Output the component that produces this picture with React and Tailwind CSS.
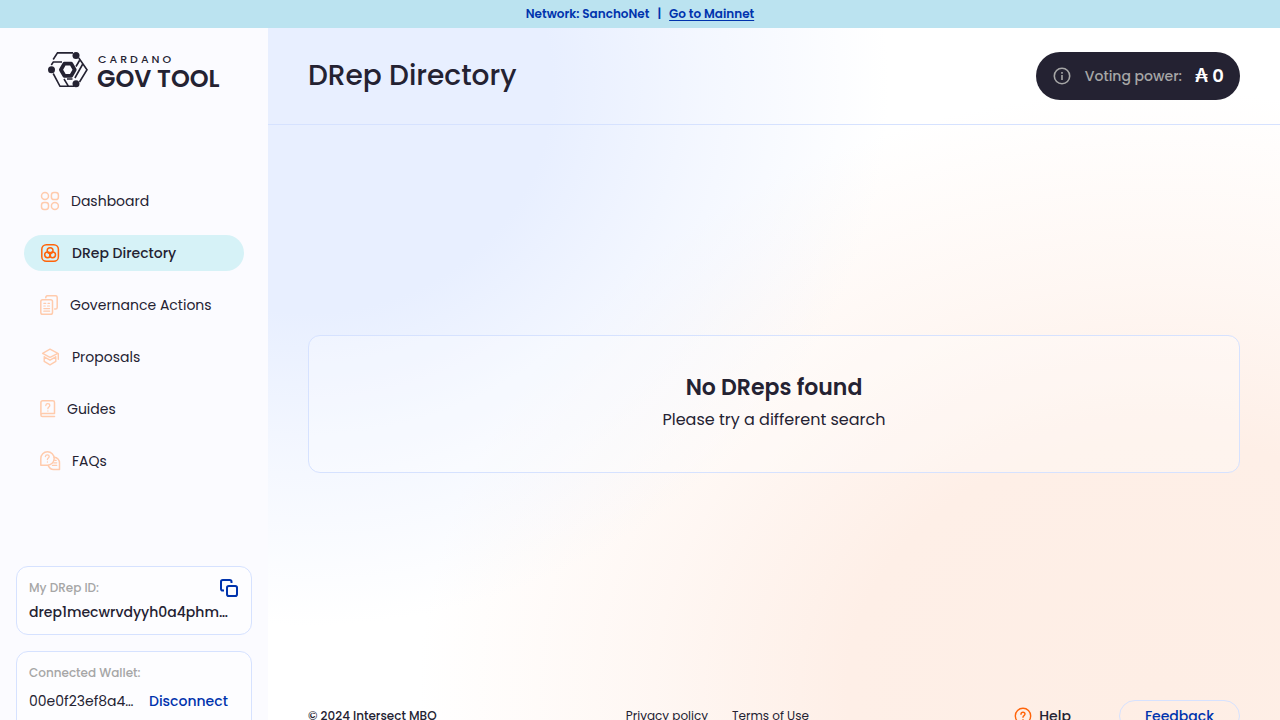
import React from "react";

const DashboardIcon = () => (
  <svg width="20" height="20" viewBox="0 0 20 20" fill="none" stroke="currentColor" strokeWidth="1.5" aria-hidden="true">
    <circle cx="5" cy="5" r="3.5" />
    <rect x="11.4" y="1.5" width="7" height="7" rx="2.6" />
    <rect x="1.5" y="11.4" width="7" height="7" rx="2.6" />
    <circle cx="14.9" cy="14.9" r="3.5" />
  </svg>
);

const DirectoryIcon = () => (
  <svg width="21" height="20" viewBox="0 0 21 20" fill="none" stroke="currentColor" strokeWidth="1.5" aria-hidden="true">
    <rect x="1.8" y="1.7" width="16.6" height="16.6" rx="4.6" />
    <circle cx="10.1" cy="7.6" r="2.9" />
    <circle cx="7.6" cy="11.8" r="2.9" />
    <circle cx="12.6" cy="11.8" r="2.9" />
  </svg>
);

const ActionsIcon = () => (
  <svg width="19" height="20" viewBox="0 0 19 20" fill="none" stroke="currentColor" strokeWidth="1.5" strokeLinecap="round" strokeLinejoin="round" aria-hidden="true">
    <path d="M5.8 2.800V2.400c0-1 .7-1.700 1.700-1.700h8c1 0 1.700.7 1.700 1.700v10c0 1-.7 1.700-1.700 1.700h-.8" />
    <rect x="0.8" y="4.7" width="11.7" height="14.5" rx="1.8" />
    <path d="M3.800 8.300h2M8 8.300h1.500M3.800 11h1.500M7.500 11h2M3.800 13.600h5.800M3.800 16.200h5.800" strokeWidth="1.2" />
  </svg>
);

const ProposalsIcon = () => (
  <svg width="21" height="20" viewBox="0 0 21 20" fill="none" stroke="currentColor" strokeWidth="1.4" strokeLinecap="round" strokeLinejoin="round" aria-hidden="true">
    <path d="M10 2.200 17.900 6.300 10 10.300 2.600 6.300 10 2.200Z" />
    <path d="M18.300 6.700v5.500M4.200 9.800l5.800 3.400 5.800-3.400M4.200 9.800v4.600l5.800 3.500 5.800-3.500V9.800" />
  </svg>
);

const GuidesIcon = () => (
  <svg width="16" height="20" viewBox="0 0 16 20" fill="none" stroke="currentColor" strokeWidth="1.5" strokeLinecap="round" strokeLinejoin="round" aria-hidden="true">
    <path d="M.9 15.800V3.400c0-1 .7-1.700 1.700-1.700h10.200c1 0 1.700.7 1.700 1.700v11.200H2.400c-.9 0-1.500.7-1.500 1.500s.6 1.500 1.500 1.500h12.100" />
    <path d="M5.800 6.500c.1-1.100.9-1.800 2-1.800s2 .8 2 1.800c0 1.500-1.900 1.600-1.900 3.200M7.900 11.900v.1" strokeWidth="1.3" />
  </svg>
);

const FaqIcon = () => (
  <svg width="21" height="20" viewBox="0 0 21 20" fill="none" stroke="currentColor" strokeWidth="1.5" strokeLinecap="round" strokeLinejoin="round" aria-hidden="true">
    <path d="M.8 14.200V7.600A6.700 6.700 0 1 1 7.400 14.200H.8Z" />
    <path d="M14.200 6.200a5.700 5.700 0 0 1 5.300 5.800v6.400h-5.700c-2.400.1-4.400-1.200-5.500-3.800" />
    <path d="M5.400 5.500c.1-1 .9-1.700 1.900-1.700s1.900.8 1.900 1.700c0 1.400-1.800 1.500-1.800 3M7.400 10.900v.1M14.700 9.300h1.500M13.600 11.800h3.100M12.500 14.400h4.200" strokeWidth="1.3" />
  </svg>
);

const items = [
  { label: "Dashboard", Icon: DashboardIcon },
  { label: "DRep Directory", Icon: DirectoryIcon, active: true },
  { label: "Governance Actions", Icon: ActionsIcon },
  { label: "Proposals", Icon: ProposalsIcon },
  { label: "Guides", Icon: GuidesIcon },
  { label: "FAQs", Icon: FaqIcon },
];

const Logo = () => (
  <a href="#home" className="flex h-9 items-center gap-[9px] whitespace-nowrap" aria-label="Cardano Gov Tool">
    <svg className="shrink-0" width="40" height="36" viewBox="0 0 40 36" fill="none" stroke="currentColor" strokeWidth="1.6" aria-hidden="true">
      <path d="M5.200 7.500 9.500.9H25M3.300 13 5.300 10H14M30.800 6 39 17.700 31.500 30M34.500 12.500l-7.600 13.500M31.500 8.500l-3.500 6M5.200 21.500 12 34.300h14M16 27l4.500 7.300M19 27h5.500" />
      <circle cx="28" cy="3.600" r="3.500" fill="currentColor" stroke="none" />
      <circle cx="3.500" cy="17.700" r="3.500" fill="currentColor" stroke="none" />
      <circle cx="28" cy="31.700" r="3.500" fill="currentColor" stroke="none" />
      <path d="M16.400 11.600h6.800l3.500 6.100-3.500 6.100h-6.800l-3.500-6.100 3.500-6.100Z" strokeWidth="3.8" strokeLinejoin="round" />
    </svg>
    <span className="flex flex-col gap-1 pt-0.5">
      <span className="pl-px text-[11px] leading-3 font-medium tracking-[3px]">CARDANO</span>
      <span className="text-2xl leading-5 font-semibold">GOV TOOL</span>
    </span>
  </a>
);

const NavItem = ({ label, Icon, active }) => (
  <a
    href="#nav"
    aria-current={active ? "page" : undefined}
    className={
      active
        ? "flex h-9 items-center gap-[11px] rounded-full bg-[#d6f2f7] px-4 font-medium"
        : "flex h-9 items-center gap-[11px] rounded-full px-4"
    }
  >
    <span className={active ? "text-[#ff640a]" : "text-[#ffcbad]"}>
      <Icon />
    </span>
    {label}
  </a>
);

const Sidebar = () => (
  <aside className="flex w-[268px] shrink-0 flex-col bg-[#fbfbff]">
    <div className="px-12 pt-6 pb-2">
      <Logo />
    </div>
    <nav className="flex flex-1 flex-col justify-center gap-4 px-6 text-sm">
      {items.map((item) => (
        <NavItem key={item.label} {...item} />
      ))}
    </nav>
    <div className="flex flex-col gap-4 px-4 pb-4">
      <section className="rounded-xl border border-[#d6e2ff] bg-[#fdfdff] px-3 pt-[11px] pb-3">
        <div className="flex items-center justify-between">
          <h2 className="text-xs leading-5 font-medium text-[#a6a6a6]">My DRep ID:</h2>
          <button aria-label="Copy DRep ID" className="text-[#0033ad]">
            <svg width="19" height="20" viewBox="1 0 19 20" fill="none" stroke="currentColor" strokeWidth="2" strokeLinejoin="round" aria-hidden="true">
              <rect x="8" y="8" width="10" height="10" rx="1.8" />
              <path d="M5 12.500H3.800c-1 0-1.800-.8-1.800-1.800V3.800C2 2.800 2.800 2 3.800 2h6.900c1 0 1.800.8 1.800 1.800V5" />
            </svg>
          </button>
        </div>
        <p className="truncate pt-1 text-sm font-medium">drep1mecwrvdyyh0a4phmwqz7lk</p>
      </section>
      <section className="rounded-xl border border-[#d6e2ff] bg-[#fdfdff] px-3 pt-[11px] pb-4">
        <h2 className="text-xs leading-5 font-medium text-[#a6a6a6]">Connected Wallet:</h2>
        <div className="flex items-center gap-2.5 pt-1 text-sm leading-7">
          <p className="w-[110px] truncate">00e0f23ef8a4b71c9d</p>
          <button className="font-medium text-[#0033ad]">Disconnect</button>
        </div>
      </section>
    </div>
  </aside>
);

export default function App() {
  return (
    <div className="font-['Poppins','Inter',sans-serif] text-[#242232]">
      <div className="flex h-7 items-center justify-center gap-2 bg-[#bbe3f0] text-xs font-semibold text-[#0033ad]">
        <span>Network: SanchoNet</span>
        <span>|</span>
        <a href="#mainnet" className="underline decoration-1 underline-offset-2">Go to Mainnet</a>
      </div>
      <div className="flex min-h-screen">
        <Sidebar />
        <main className="flex min-w-0 flex-1 flex-col bg-white bg-[radial-gradient(ellipse_580px_540px_at_4%_8%,#e8efff_0%,#e8efff_42%,#e8efff80_68%,#e8efff00_100%),radial-gradient(ellipse_740px_600px_at_88%_92%,#feeee5_0%,#feefe7_42%,#feefe780_68%,#feefe700_100%)]">
          <header className="flex items-center justify-between border-b border-[#d6e2ff] px-10 py-6">
            <h1 className="text-[28px] leading-10 font-medium">DRep Directory</h1>
            <div className="flex h-12 items-center rounded-full bg-[#242232] px-4">
              <svg width="20" height="20" viewBox="0 0 20 20" fill="none" stroke="#a6a6a6" strokeWidth="1.6" aria-hidden="true">
                <circle cx="10" cy="10" r="7.7" />
                <path d="M10 9v5M10 6v1.700" />
              </svg>
              <span className="px-[13px] text-sm font-medium text-[#a6a6a6]">Voting power:</span>
              <span className="text-lg font-semibold text-white">₳ 0</span>
            </div>
          </header>
          <div className="flex flex-1 flex-col justify-center px-10 pb-0.5">
            <section className="flex flex-col items-center gap-1 rounded-xl border border-[#d6e2ff] bg-white/30 pt-9 pb-10 text-center">
              <h2 className="text-[22px] leading-8 font-semibold">No DReps found</h2>
              <p className="text-base">Please try a different search</p>
            </section>
          </div>
          <footer className="flex items-center justify-between px-10 py-4 text-xs">
            <p className="font-medium">© 2024 Intersect MBO</p>
            <div className="flex gap-6">
              <a href="#privacy">Privacy policy</a>
              <a href="#terms">Terms of Use</a>
            </div>
            <div className="flex items-center gap-12 text-sm font-medium">
              <button className="flex items-center gap-[7px] pl-4">
                <svg width="18" height="18" viewBox="0 0 18 18" fill="none" stroke="#ff640a" strokeWidth="1.4" strokeLinecap="round" aria-hidden="true">
                  <circle cx="9" cy="9" r="7.7" />
                  <path d="M7 7.200c0-1.200.9-2 2-2s2 .8 2 1.900c0 1.500-2 1.500-2 3.100M9 12.700v.1" />
                </svg>
                Help
              </button>
              <button className="h-8 rounded-full border border-[#d6e2ff] px-[25px] text-[#0033ad]">Feedback</button>
            </div>
          </footer>
        </main>
      </div>
    </div>
  );
}
